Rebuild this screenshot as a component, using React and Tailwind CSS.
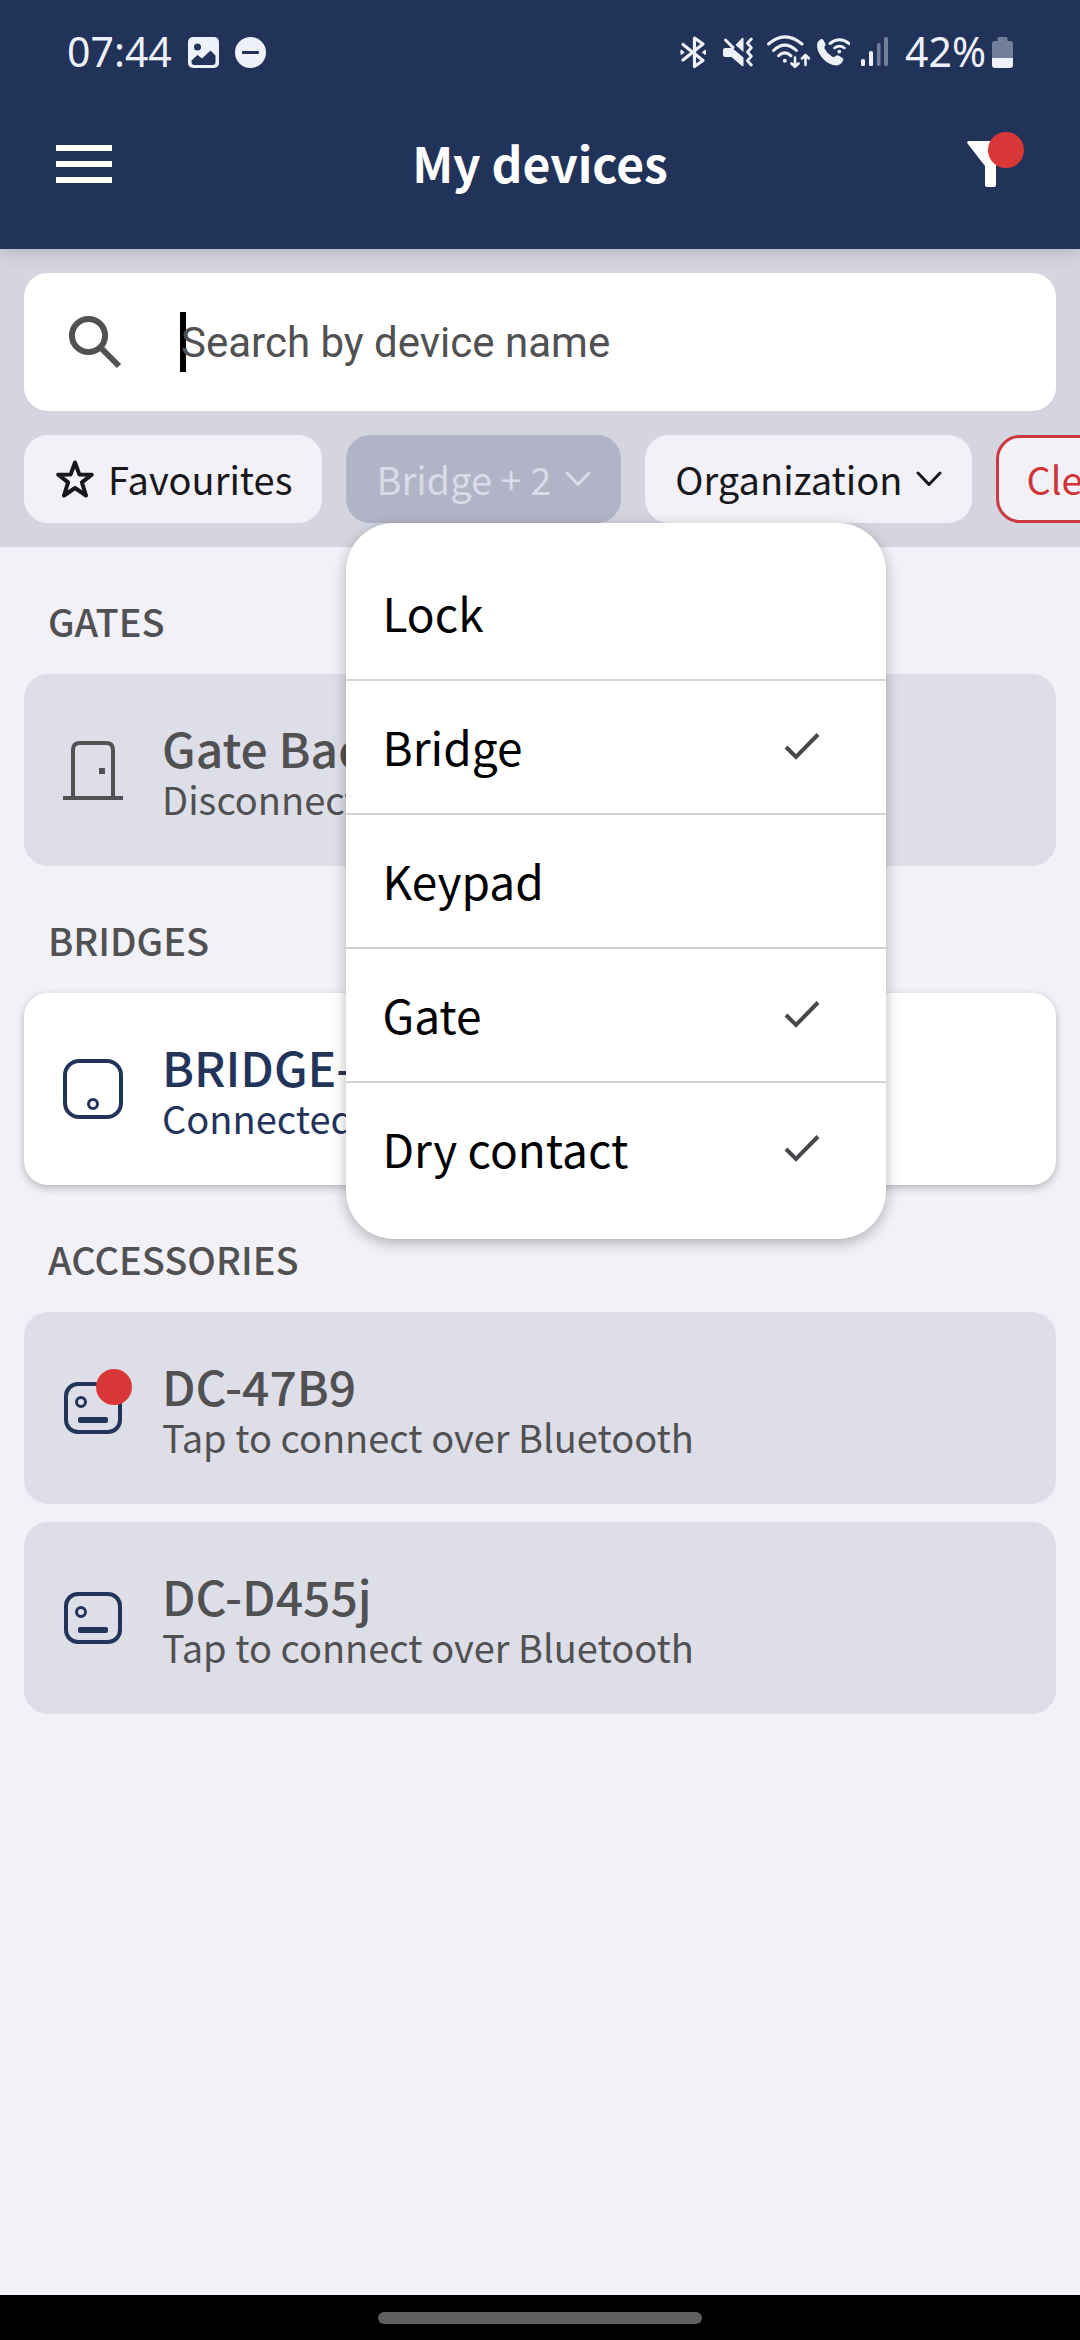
import React from 'react';

const statusWhite = '#eef1fa';

function ImageIcon() {
  return (
    <svg width="31" height="31" viewBox="0 0 31 31" aria-hidden="true">
      <rect width="31" height="31" rx="5" fill={statusWhite} />
      <circle cx="9.5" cy="10" r="3.5" fill="#22335a" />
      <path d="M3.5 23.5 L9.5 18 L14 21.5 L22.5 13.5 L27.5 18.5 V25 Q27.5 28 24.5 28 H6.5 Q3.5 28 3.5 25 Z" fill="#22335a" />
    </svg>
  );
}

function DndIcon() {
  return (
    <svg width="31" height="31" viewBox="0 0 31 31" aria-hidden="true">
      <circle cx="15.5" cy="15.5" r="15.5" fill={statusWhite} />
      <rect x="7" y="14" width="17" height="3" rx="0.8" fill="#22335a" />
    </svg>
  );
}

function BluetoothIcon() {
  return (
    <svg width="28" height="34" viewBox="0 0 28 34" fill="none" stroke={statusWhite} strokeWidth="3.2" strokeLinejoin="round" strokeLinecap="round" aria-hidden="true">
      <path d="M4 9.5 L24 25.5 L15.5 31.5 V3 L24 9 L4 25" />
      <path d="M2.2 15.6 L4.6 17.3 L2.2 19 Z M26.2 15.6 L23.8 17.3 L26.2 19 Z" fill={statusWhite} strokeWidth="1.6" />
    </svg>
  );
}

function MuteIcon() {
  return (
    <svg width="30" height="32" viewBox="0 0 30 32" fill="none" aria-hidden="true">
      <path d="M2 12 H6.500 L8.500 11.500 L20.500 21.500 V30 H19 L8.500 21 H2 Q0 21 0 19 V14 Q0 12 2 12 Z" fill={statusWhite} />
      <path d="M12.500 9 L19 2 H20.500 V16 Z" fill={statusWhite} />
      <path d="M2.500 4 L10 11.500" stroke={statusWhite} strokeWidth="3" strokeLinecap="round" />
      <path d="M28.300 3 L24.500 7.300 L28.300 11.700 L24.500 16 L28.300 20.300 L24.500 24.700 L28.300 29" stroke={statusWhite} strokeWidth="2.800" strokeLinecap="round" strokeLinejoin="round" />
    </svg>
  );
}

function WifiIcon() {
  return (
    <svg width="44" height="36" viewBox="0 0 44 36" fill="none" stroke={statusWhite} strokeWidth="3" strokeLinecap="round" strokeLinejoin="round" aria-hidden="true">
      <path d="M2.500 10 Q18.800 -4.200 36 10" />
      <path d="M7.500 16.500 Q18.800 5.600 30.500 16.500" />
      <path d="M12.500 21.800 Q18.800 16 25 21.800" />
      <circle cx="18.800" cy="26.700" r="2" fill={statusWhite} stroke="none" />
      <path d="M29 23.500 V32 M25.500 29.500 L29 32.800 L32.500 29.500 M39.500 31 V21.500 M36 24.500 L39.500 21 L43 24.500" strokeWidth="2.600" />
    </svg>
  );
}

function CallIcon() {
  return (
    <svg width="34" height="30" viewBox="0 0 34 30" fill="none" aria-hidden="true">
      <path d="M5 2 Q6.500 1.500 7.300 3 L9.500 7 Q10 8.200 8.600 9.700 Q8 10.600 8.800 12 Q11.500 17 16 19.600 Q17.500 20.500 18.500 19.800 L20.500 18.600 Q21.700 18 23 18.800 L26.500 21 Q28 22 27 23.800 Q24.500 28.500 20 28.500 Q12 28 5.500 20 Q1 14 1 8 Q1.300 4 5 2 Z" fill={statusWhite} />
      <path d="M14 6.500 Q23.500 -1 33 6.500" stroke={statusWhite} strokeWidth="3" strokeLinecap="round" />
      <path d="M18.500 11 Q23.500 7.200 28.500 11" stroke={statusWhite} strokeWidth="2.600" strokeLinecap="round" />
      <circle cx="23.300" cy="14.600" r="1.900" fill={statusWhite} />
    </svg>
  );
}

function SignalIcon() {
  return (
    <svg width="28" height="30" viewBox="0 0 28 30" aria-hidden="true">
      <rect x="0" y="22" width="4" height="7" rx="1.500" fill={statusWhite} />
      <rect x="8" y="14" width="4" height="15" rx="1.500" fill={statusWhite} />
      <rect x="16" y="6" width="3.500" height="23" rx="1.500" fill="#707d9b" />
      <rect x="23" y="0" width="4" height="29" rx="1.500" fill="#707d9b" />
    </svg>
  );
}

function BatteryIcon() {
  return (
    <svg width="21" height="31" viewBox="0 0 21 31" aria-hidden="true">
      <path d="M7 0 H14.500 Q15.500 0 15.500 1.500 V4 H18.500 Q21 4 21 6.500 V21 H0 V6.500 Q0 4 2.500 4 H5.500 V1.500 Q5.500 0 7 0 Z" fill="#717e9b" />
      <path d="M0 21 H21 V28 Q21 31 18 31 H3 Q0 31 0 28 Z" fill={statusWhite} />
    </svg>
  );
}

function SearchIcon() {
  return (
    <svg width="54" height="54" viewBox="0 0 54 54" fill="none" stroke="#515153" aria-hidden="true">
      <circle cx="20.500" cy="20.500" r="16.600" strokeWidth="6" />
      <path d="M34 34 L51 51" strokeWidth="6" />
      <path d="M31.500 31.500 L36 36" strokeWidth="4" />
    </svg>
  );
}

function StarIcon() {
  return (
    <svg width="38" height="40" viewBox="0 0 38 40" fill="none" stroke="#17171c" strokeWidth="4" strokeLinejoin="round" aria-hidden="true">
      <path d="M19 3.500 L23.300 15.400 L35.800 15.700 L25.900 23.400 L30 36.500 L19 29 L8 36.500 L12.100 23.400 L2.200 15.700 L14.700 15.400 Z" />
    </svg>
  );
}

function Chevron() {
  return (
    <svg width="26" height="16" viewBox="0 0 26 16" fill="none" stroke="currentColor" strokeWidth="3" strokeLinecap="round" strokeLinejoin="round" aria-hidden="true">
      <path d="M2 2 L13 13.500 L24 2" />
    </svg>
  );
}

function CheckIcon() {
  return (
    <svg width="36" height="28" viewBox="0 0 36 28" fill="none" stroke="#48484c" strokeWidth="4" aria-hidden="true">
      <path d="M2 15 L12 25 L34 2.500" />
    </svg>
  );
}

function GateIcon() {
  return (
    <svg width="60" height="60" viewBox="0 0 60 60" fill="none" stroke="#515153" strokeWidth="4" aria-hidden="true">
      <path d="M10 58 V10 Q10 3 17 3 H43 Q50 3 50 10 V58" />
      <path d="M0 58 H60" />
      <rect x="36" y="28" width="6" height="6" fill="#515153" stroke="none" />
    </svg>
  );
}

function BridgeIcon() {
  return (
    <svg width="60" height="60" viewBox="0 0 60 60" fill="none" stroke="#23345b" strokeWidth="4" aria-hidden="true">
      <rect x="2" y="2" width="56" height="56" rx="14" />
      <circle cx="30" cy="45" r="4.500" strokeWidth="3" />
    </svg>
  );
}

function ContactIcon() {
  return (
    <svg width="60" height="52" viewBox="0 0 60 52" fill="none" stroke="#23345b" strokeWidth="4" aria-hidden="true">
      <rect x="3" y="2" width="54" height="48" rx="12" />
      <circle cx="18" cy="20" r="4.500" strokeWidth="3" />
      <rect x="15" y="35" width="30" height="6" rx="2" fill="#23345b" stroke="none" />
    </svg>
  );
}

function Section({ title, children }) {
  return (
    <section>
      <h2 className="px-6 pt-[46px] pb-[25px] text-[38px] leading-[56px] font-medium text-[#515153]">{title}</h2>
      <ul className="flex flex-col gap-[18px]">{children}</ul>
    </section>
  );
}

function DeviceCard({ icon, name, status, online, alert }) {
  const tone = online
    ? 'bg-white text-[#23345b] shadow-[0_3px_8px_rgba(0,0,0,0.25)]'
    : 'bg-[#dedee8] text-[#515153]';
  return (
    <li>
      <button type="button" className={'flex h-[192px] w-full items-center gap-[39px] rounded-[24px] px-[39px] text-left ' + tone}>
        <span className="relative shrink-0">
          {icon}
          {alert && <span className="absolute -top-[13px] -right-[9px] size-9 rounded-full bg-[#da3838]" />}
        </span>
        <span className="flex flex-col">
          <span className="text-[48px] leading-[58px] font-medium">{name}</span>
          <span className="text-[38px] leading-[46px]">{status}</span>
        </span>
      </button>
    </li>
  );
}

const types = [
  { label: 'Lock', on: false },
  { label: 'Bridge', on: true },
  { label: 'Keypad', on: false },
  { label: 'Gate', on: true },
  { label: 'Dry contact', on: true },
];

function TypeMenu() {
  return (
    <div role="menu" aria-label="Device type" className="absolute top-full left-0 z-20 w-[540px] rounded-[48px] bg-white py-6 shadow-[0_4px_14px_rgba(0,0,0,0.28)]">
      {types.map((t) => (
        <button
          key={t.label}
          type="button"
          role="menuitemcheckbox"
          aria-checked={t.on}
          className="flex w-full items-center justify-between border-b-2 border-[#d2d2d4] pr-[66px] pb-[2px] pl-[36px] text-[46px] leading-[130px] text-black last:border-b-0"
        >
          {t.label}
          {t.on && <CheckIcon />}
        </button>
      ))}
    </div>
  );
}

export default function App() {
  return (
    <div className="flex min-h-screen flex-col overflow-x-clip bg-[#f2f1f8] font-['Noto_Sans_CJK_SC','Noto_Sans',sans-serif]">
      <header className="relative z-10 bg-[#22335a] text-white shadow-[0_2px_16px_rgba(60,50,80,0.25)]">
        <div className="flex h-[104px] items-center justify-between px-[67px] font-['Noto_Sans',sans-serif] text-[41px] text-[#eef1fa]">
          <div className="flex items-center">
            <time>07:44</time>
            <span className="ml-4"><ImageIcon /></span>
            <span className="ml-4"><DndIcon /></span>
          </div>
          <div className="flex items-center">
            <BluetoothIcon />
            <span className="ml-4"><MuteIcon /></span>
            <span className="ml-[13px]"><WifiIcon /></span>
            <span className="ml-[6px]"><CallIcon /></span>
            <span className="ml-[11px]"><SignalIcon /></span>
            <span className="ml-4">42%</span>
            <span className="ml-[6px]"><BatteryIcon /></span>
          </div>
        </div>
        <div className="grid h-[145px] grid-cols-[1fr_auto_1fr] items-start px-[56px] pt-5">
          <button type="button" aria-label="Menu" className="flex h-20 w-[56px] flex-col justify-center gap-[10px]">
            <span className="h-[6px] w-full bg-white" />
            <span className="h-[6px] w-full bg-white" />
            <span className="h-[6px] w-full bg-white" />
          </button>
          <h1 className="text-[48px] leading-[76px] font-bold">My devices</h1>
          <button type="button" aria-label="Filters" className="relative flex h-20 w-[57px] items-center justify-self-end">
            <svg width="47" height="46" viewBox="0 0 47 46" aria-hidden="true">
              <path d="M1.500 0 H45.500 Q47 0 46.500 2 L29 25 V44 Q29 46 27 46 H20 Q18 46 18 44 V25 L0.500 2.500 Q-0.500 0.500 1.500 0 Z" fill="#fff" />
            </svg>
            <span className="absolute top-2 right-0 size-9 rounded-full bg-[#da3838]" />
          </button>
        </div>
      </header>

      <div className="flex flex-col gap-6 bg-[#d5d5e1] p-6">
        <label className="relative flex h-[138px] items-center rounded-[24px] bg-white pl-[44px]">
          <SearchIcon />
          <span className="absolute left-[156px] h-[60px] w-[6px] bg-black" />
          <input
            type="text"
            aria-label="Search by device name"
            placeholder="Search by device name"
            className="relative ml-[59px] min-w-0 flex-1 bg-transparent font-[Roboto,sans-serif] text-[42px] text-black outline-none placeholder:text-[#515153]"
          />
        </label>
        <div className="flex gap-6 text-[38px] leading-[88px] whitespace-nowrap text-[#17171c]">
          <button type="button" className="flex h-[88px] shrink-0 items-center gap-[14px] rounded-[24px] bg-[#f2f1f8] pr-[30px] pl-[32px]">
            <StarIcon />
            Favourites
          </button>
          <div className="relative shrink-0">
            <button type="button" aria-haspopup="menu" aria-expanded="true" className="flex h-[88px] items-center gap-[14px] rounded-[24px] bg-[#b0b4c6] px-[30px] text-[#d9dbe8]">
              Bridge + 2
              <Chevron />
            </button>
            <TypeMenu />
          </div>
          <button type="button" className="flex h-[88px] shrink-0 items-center gap-[14px] rounded-[24px] bg-[#f2f1f8] px-[30px]">
            Organization
            <Chevron />
          </button>
          <button type="button" className="flex h-[88px] shrink-0 items-center rounded-[24px] border-3 border-[#cb3a40] bg-[#f2f1f8] px-[27px] text-[#d03338]">
            Clear
          </button>
        </div>
      </div>

      <main className="flex-1 px-6 pb-6">
        <Section title="GATES">
          <DeviceCard icon={<GateIcon />} name="Gate Back" status="Disconnected" />
        </Section>
        <Section title="BRIDGES">
          <DeviceCard icon={<BridgeIcon />} name="BRIDGE-" status="Connected" online />
        </Section>
        <Section title="ACCESSORIES">
          <DeviceCard icon={<ContactIcon />} name="DC-47B9" status="Tap to connect over Bluetooth" alert />
          <DeviceCard icon={<ContactIcon />} name="DC-D455j" status="Tap to connect over Bluetooth" />
        </Section>
      </main>

      <footer className="flex h-[45px] items-center justify-center bg-black">
        <div className="h-3 w-[324px] rounded-full bg-[#5f5f5f]" />
      </footer>
    </div>
  );
}
